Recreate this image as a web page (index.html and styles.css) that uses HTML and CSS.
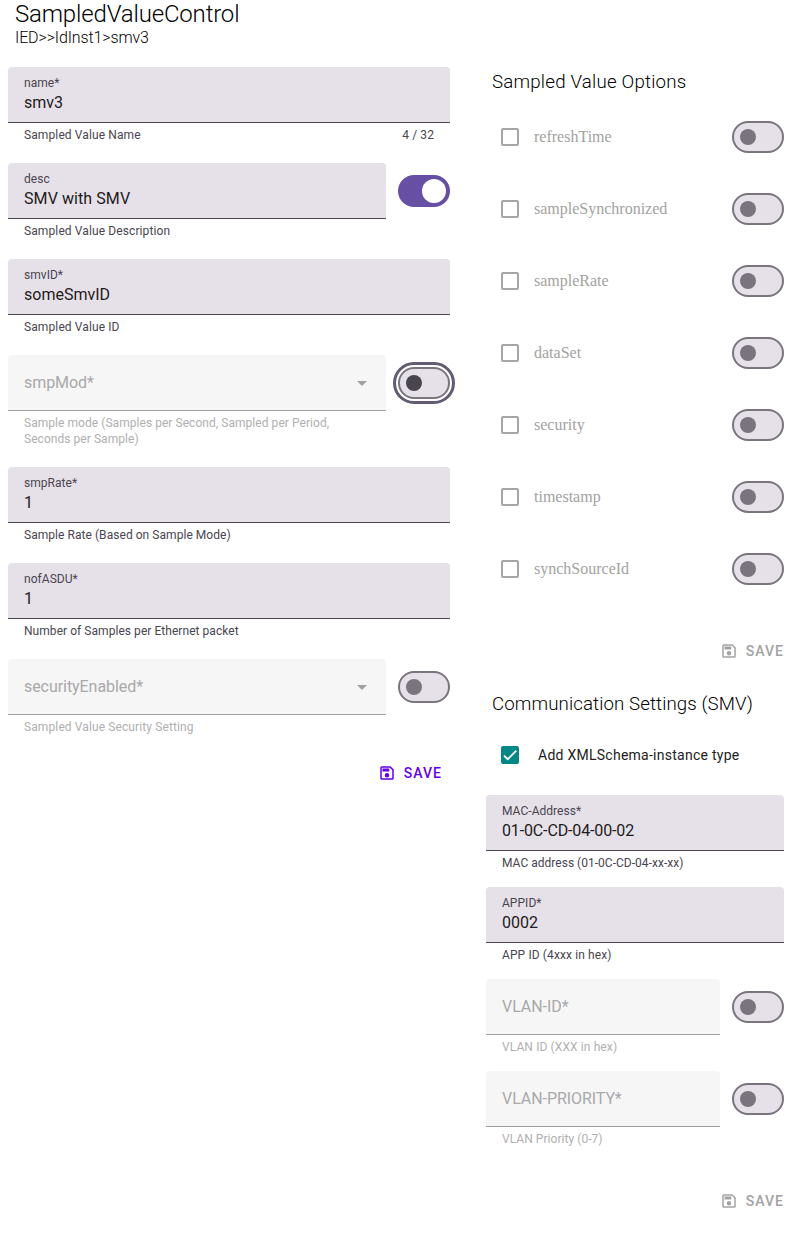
FILE: index.html
```html
<!DOCTYPE html>
<html lang="en">
<head>
<meta charset="utf-8">
<title>SampledValueControl</title>
<link rel="stylesheet" href="styles.css">
</head>
<body>
<svg class="defs" aria-hidden="true">
  <symbol id="save" viewBox="0 0 24 24"><path d="M5 3h11.600L21 7.400V19a2 2 0 0 1-2 2H5a2 2 0 0 1-2-2V5a2 2 0 0 1 2-2Zm0 2v14h14V8.200L15.800 5ZM12 12a3 3 0 1 0 0 6 3 3 0 0 0 0-6ZM6 6h9v4H6Z" fill-rule="evenodd"/></symbol>
  <symbol id="arrow" viewBox="0 0 10 5"><path d="M0 0 5 5 10 0Z"/></symbol>
</svg>
<header class="header">
  <h1 class="title">SampledValueControl</h1>
  <div class="path">IED&gt;&gt;IdInst1&gt;smv3</div>
</header>
<main class="content">
  <section class="attributes">
    <div class="row"><div class="field"><div class="box"><label class="label">name*</label><span class="value">smv3</span></div><div class="support wide"><span>Sampled Value Name</span><span>4 / 32</span></div></div></div>
    <div class="row"><div class="field"><div class="box"><label class="label">desc</label><span class="value desc">SMV with SMV</span></div><div class="support wide">Sampled Value Description</div></div><span class="switch on"></span></div>
    <div class="row"><div class="field"><div class="box"><label class="label">smvID*</label><span class="value">someSmvID</span></div><div class="support wide">Sampled Value ID</div></div></div>
    <div class="row"><div class="field disabled"><div class="box"><span class="placeholder">smpMod*</span><svg class="arrow"><use href="#arrow"/></svg></div><div class="support">Sample mode (Samples per Second, Sampled per Period, Seconds per Sample)</div></div><span class="switch focused"></span></div>
    <div class="row"><div class="field"><div class="box"><label class="label">smpRate*</label><span class="value">1</span></div><div class="support">Sample Rate (Based on Sample Mode)</div></div></div>
    <div class="row"><div class="field"><div class="box"><label class="label">nofASDU*</label><span class="value">1</span></div><div class="support">Number of Samples per Ethernet packet</div></div></div>
    <div class="row"><div class="field disabled"><div class="box"><span class="placeholder">securityEnabled*</span><svg class="arrow"><use href="#arrow"/></svg></div><div class="support wide">Sampled Value Security Setting</div></div><span class="switch"></span></div>
    <div class="save active"><svg class="save-icon"><use href="#save"/></svg>SAVE</div>
  </section>
  <div class="side">
    <section class="options">
      <h2 class="heading">Sampled Value Options</h2>
      <div class="option"><span class="check"></span><span class="option-name">refreshTime</span><span class="switch"></span></div>
      <div class="option"><span class="check"></span><span class="option-name">sampleSynchronized</span><span class="switch"></span></div>
      <div class="option"><span class="check"></span><span class="option-name">sampleRate</span><span class="switch"></span></div>
      <div class="option"><span class="check"></span><span class="option-name">dataSet</span><span class="switch"></span></div>
      <div class="option"><span class="check"></span><span class="option-name">security</span><span class="switch"></span></div>
      <div class="option"><span class="check"></span><span class="option-name">timestamp</span><span class="switch"></span></div>
      <div class="option"><span class="check"></span><span class="option-name">synchSourceId</span><span class="switch"></span></div>
      <div class="save"><svg class="save-icon"><use href="#save"/></svg>SAVE</div>
    </section>
    <section class="communication">
      <h2 class="heading narrow">Communication Settings (SMV)</h2>
      <div class="type-option"><span class="check checked"><svg class="tick" viewBox="0 0 24 24"><path d="M1.730 12.910 8.100 19.280 22.790 4.590"/></svg></span><span>Add XMLSchema-instance type</span></div>
      <div class="row"><div class="field"><div class="box"><label class="label">MAC-Address*</label><span class="value mac">01-0C-CD-04-00-02</span></div><div class="support mac-hint">MAC address (01-0C-CD-04-xx-xx)</div></div></div>
      <div class="row"><div class="field"><div class="box"><label class="label">APPID*</label><span class="value">0002</span></div><div class="support wide">APP ID (4xxx in hex)</div></div></div>
      <div class="row"><div class="field disabled"><div class="box"><span class="placeholder">VLAN-ID*</span></div><div class="support wide">VLAN ID (XXX in hex)</div></div><span class="switch"></span></div>
      <div class="row"><div class="field disabled"><div class="box"><span class="placeholder">VLAN-PRIORITY*</span></div><div class="support">VLAN Priority (0-7)</div></div><span class="switch"></span></div>
      <div class="save"><svg class="save-icon"><use href="#save"/></svg>SAVE</div>
    </section>
  </div>
</main>
</body>
</html>
```
FILE: styles.css
```css
* { box-sizing: border-box; }
body { margin: 0; background: #fff; font-family: Roboto, sans-serif; color: #1d1b20; }
.defs { position: absolute; width: 0; height: 0; }
.header { height: 67px; padding-left: 15px; color: #000; font-weight: 300; }
.title { margin: 0; font-size: 24px; line-height: 28px; font-weight: 300; letter-spacing: -0.17px; }
.path { font-size: 16px; line-height: 19px; letter-spacing: -0.13px; }
.content { display: flex; gap: 36px; padding: 0 16px 0 8px; }
.attributes { width: 442px; display: flex; flex-direction: column; gap: 20px; }
.side { width: 298px; }
.row { display: flex; gap: 12px; }
.field { flex: 1; min-width: 0; }
.box { height: 56px; padding: 8px 16px; display: flex; flex-direction: column; background: #e6e0e9; border-bottom: 1px solid #49454f; border-radius: 4px 4px 0 0; }
.label { font-size: 12px; line-height: 16px; color: #49454f; letter-spacing: 0.04px; }
.value { font-size: 16px; line-height: 24px; }
.desc { letter-spacing: 0.08px; }
.mac { letter-spacing: -0.14px; }
.support { display: flex; justify-content: space-between; padding: 4px 16px 0; font-size: 12px; line-height: 16px; color: #49454f; letter-spacing: 0.05px; }
.support.wide { letter-spacing: 0.11px; }
.support.mac-hint { letter-spacing: 0.02px; }
.disabled .box { flex-direction: row; align-items: center; justify-content: space-between; background: #f6f6f6; border-color: #a09fa1; }
.disabled .support { color: #b0afb1; }
.placeholder { font-size: 16px; line-height: 24px; color: #a9a8aa; letter-spacing: -0.06px; }
.arrow { width: 10px; height: 5px; margin: 2px 3px 0 0; fill: #a09fa1; }
.switch { flex: none; width: 52px; height: 32px; margin-top: 12px; padding: 6px; border: 2px solid #79747e; border-radius: 16px; background: #e6e0e9; }
.switch::before { content: ""; display: block; width: 16px; height: 16px; border-radius: 50%; background: #79747e; }
.switch.on { padding: 2px; background: #6750a4; border-color: #6750a4; }
.switch.on::before { width: 24px; height: 24px; margin-left: 20px; background: #fff; }
.switch.focused { outline: 3px solid #625b71; outline-offset: 2px; }
.switch.focused::before { background: #49454f; }
.save { display: flex; align-items: center; justify-content: flex-end; height: 36px; font-size: 14px; font-weight: 500; letter-spacing: 1px; color: #a2a2a2; }
.save.active { margin-right: 8px; color: #6200ee; }
.save-icon { width: 18px; height: 18px; margin-right: 8px; fill: currentColor; }
.heading { margin: 0; padding: 1px 0 0 6px; font-size: 18.72px; line-height: 28px; font-weight: 300; color: #000; letter-spacing: 0.2px; }
.heading.narrow { letter-spacing: 0.09px; }
.options { height: 622px; }
.option { display: flex; align-items: center; height: 72px; padding-left: 15px; font-family: "Liberation Serif", serif; font-size: 16px; color: #a2a2a2; }
.option .switch { margin: 0 0 0 auto; }
.options .heading { margin-bottom: 5px; }
.check { width: 18px; height: 18px; border: 2px solid #a6a6a6; border-radius: 2px; }
.option-name { margin-left: 15px; }
.options .save { margin-top: 28px; }
.type-option { display: flex; align-items: center; height: 40px; margin: 17px 0 20px; padding-left: 15px; gap: 19px; font-size: 14px; letter-spacing: 0.26px; color: #212121; }
.check.checked { display: flex; align-items: center; justify-content: center; border-color: #018786; background: #018786; }
.tick { flex: none; width: 14px; height: 14px; fill: none; stroke: #fff; stroke-width: 3.120; }
.communication .row { margin-bottom: 16px; }
.communication .save { margin-top: 36px; }
```
